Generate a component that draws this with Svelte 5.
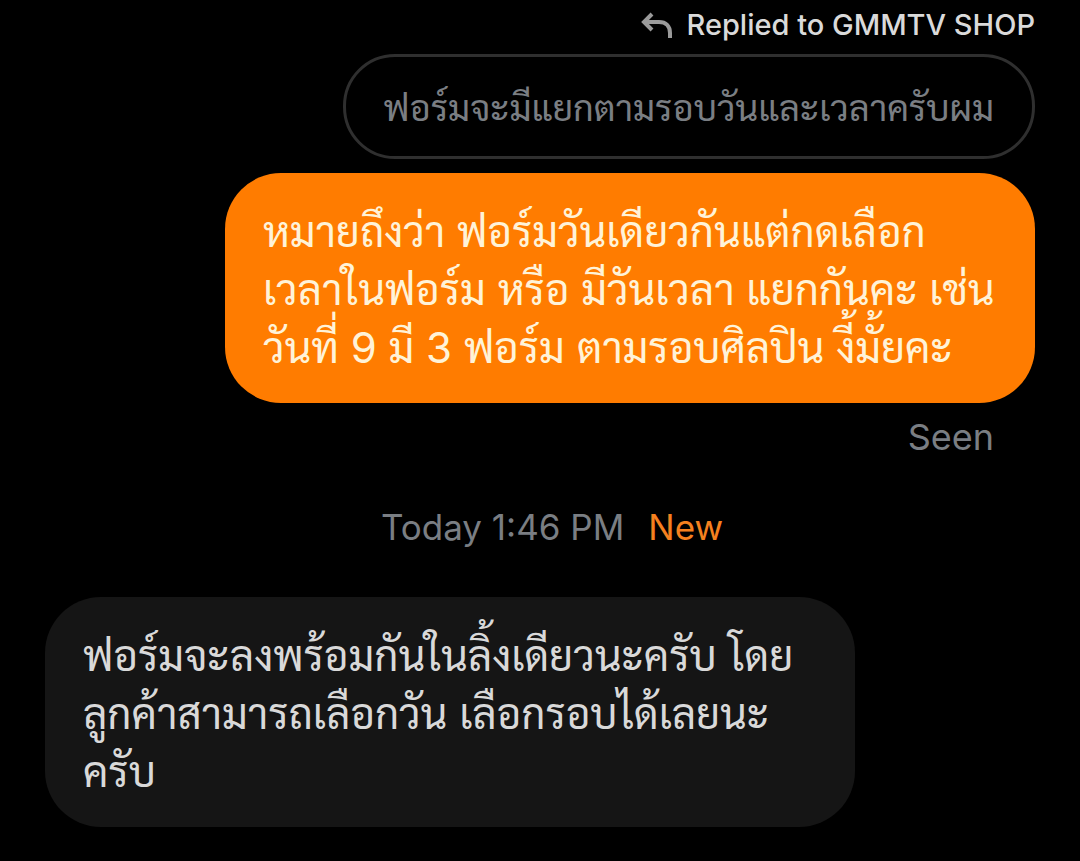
<script>
  const mine = ['หมายถึงว่า ฟอร์มวันเดียวกันแต่กดเลือก', 'เวลาในฟอร์ม หรือ มีวันเวลา แยกกันคะ เช่น', 'วันที่ 9 มี 3 ฟอร์ม ตามรอบศิลปิน งี้มั้ยคะ'];
  const theirs = ['ฟอร์มจะลงพร้อมกันในลิ้งเดียวนะครับ โดย', 'ลูกค้าสามารถเลือกวัน เลือกรอบได้เลยนะ', 'ครับ'];
</script>

<main>
  <section class="sent">
    <header>
      <svg viewBox="0 0 32 28" aria-hidden="true"><path d="M11 3 3 11l8 8M3 11h15c7 0 11 4 11 11v5" /></svg>
      <span>Replied to GMMTV SHOP</span>
    </header>
    <blockquote>ฟอร์มจะมีแยกตามรอบวันและเวลาครับผม</blockquote>
    <p class="bubble mine">{#each mine as line}<span>{line}</span>{/each}</p>
    <span class="seen">Seen</span>
  </section>
  <div class="divider"><time>Today 1:46 PM</time><strong>New</strong></div>
  <p class="bubble theirs">{#each theirs as line}<span>{line}</span>{/each}</p>
</main>

<style>
  :global(body) { margin: 0; background: #000; }
  main {
    box-sizing: border-box;
    min-height: 100vh;
    padding: 4px 45px 32px;
    display: flex;
    flex-direction: column;
    background: #000;
    font-family: Inter, Sarabun, "Noto Sans Thai Looped", "Noto Sans", sans-serif;
  }
  .sent { display: flex; flex-direction: column; align-items: flex-end; }
  header { display: flex; align-items: center; gap: 14px; height: 42px; color: #dadada; font-size: 29px; line-height: 40px; font-weight: 500; }
  svg { width: 32px; height: 28px; fill: none; stroke: #9a9a9a; stroke-width: 4; }
  blockquote {
    box-sizing: border-box;
    margin: 8px 0 14px;
    padding: 26px 38px 22px;
    border: 3px solid #2f2f2f;
    border-radius: 52px;
    color: #7a7e83;
    font-size: 36px;
    line-height: 51px;
    white-space: nowrap;
  }
  .bubble { box-sizing: border-box; width: calc(100% - 180px); margin: 0; padding: 30px 38px 26px; border-radius: 56px; font-size: 42px; line-height: 58px; }
  .bubble span { display: block; white-space: nowrap; }
  .mine { background: #ff7c00; color: #fff3d8; }
  .theirs { align-self: flex-start; background: #151515; color: #d9d9d9; }
  .seen { margin: 10px 41px 0 0; color: #7a7e83; font-size: 36px; line-height: 48px; }
  .divider { display: flex; justify-content: center; gap: 24px; margin: 42px 0 46px; padding-left: 24px; font-size: 35px; line-height: 48px; color: #7a7e83; }
  strong { color: #f5801f; font-weight: 400; }
</style>
